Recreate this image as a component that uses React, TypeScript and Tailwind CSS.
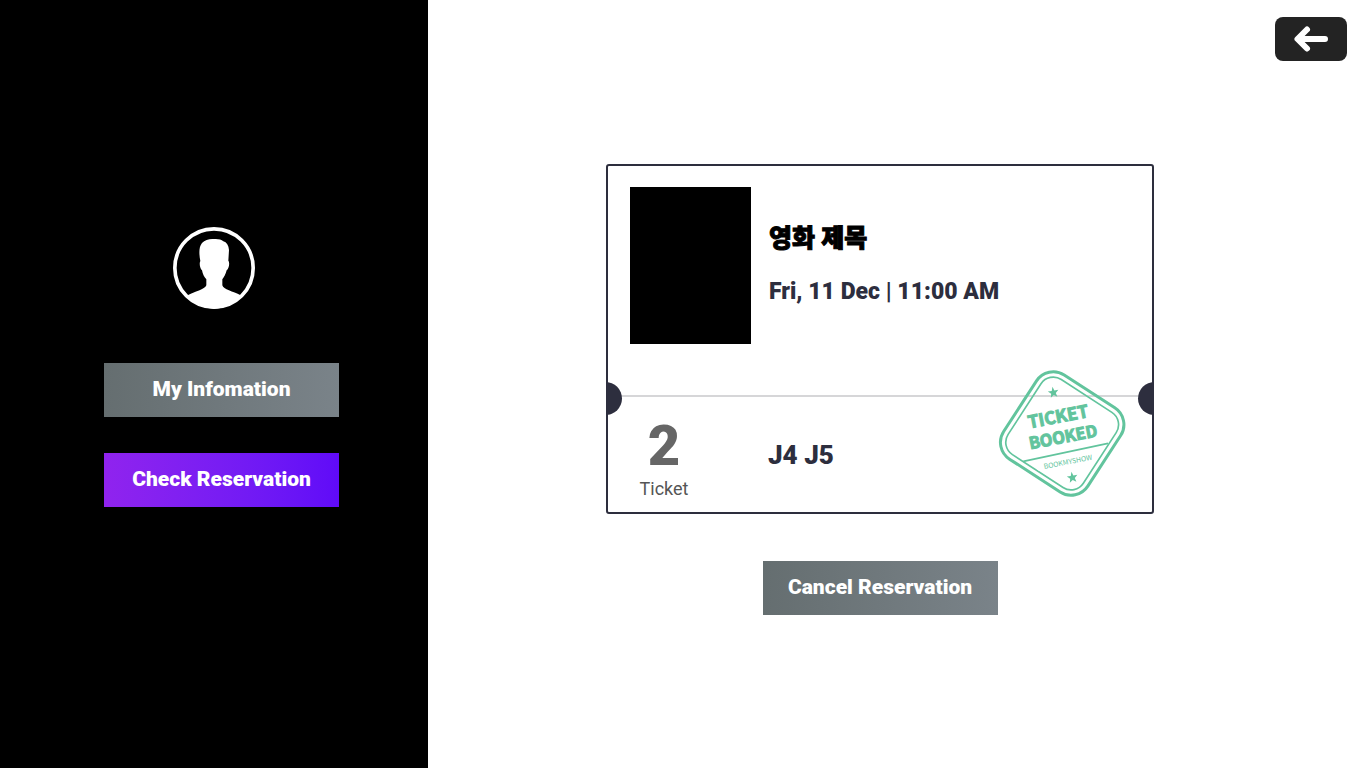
import type { ReactNode } from 'react';

function Avatar() {
  return (
    <svg viewBox="42 36 246 246" className="size-[82px]" role="img" aria-label="Profile">
      <circle cx="165" cy="159" r="117.5" fill="none" stroke="#fff" strokeWidth="11" />
      <path
        fill="#fff"
        d="M165 72 C176 71 187 73 193 79 C203 82 209 91 210 105 L208 137 C213 142 210 161 203 166 C200 178 195 187 190 193 L190 211 C193 224 222 229 245 241 C224 268 197 281 165 281 C133 281 105 267 86 241 C106 230 138 224 142 211 L142 193 C136 187 131 177 129 166 C123 161 120 144 124 138 C120 117 119 96 129 84 C138 74 151 71 165 72 Z"
      />
    </svg>
  );
}

const star =
  'M0 -17 L4 -5 L16 -5 L7 3 L10 15 L0 8 L-10 15 L-7 3 L-16 -5 L-4 -5 Z';

function BookedStamp() {
  return (
    <svg
      viewBox="39 30 384 384"
      className="absolute top-[204px] right-[26px] size-32"
      role="img"
      aria-label="Ticket booked"
    >
      <g fill="none" stroke="#62c49d">
        <g transform="rotate(33 231.5 220.5)">
          <rect x="81" y="70" width="301" height="301" rx="60" strokeWidth="9" />
          <rect x="97" y="86" width="269" height="269" rx="44" strokeWidth="5" />
        </g>
        <path d="M115 304 L369 250" strokeWidth="5" />
      </g>
      <path d="M156 323 L164 329" stroke="#fff" strokeWidth="8" />
      <g fill="#62c49d">
        <path d={star} transform="translate(205 97) rotate(-9)" />
        <path d={star} transform="translate(262 352) rotate(-9)" />
        <g
          transform="rotate(-11 231 220)"
          textAnchor="middle"
          className="font-['Noto_Sans_CJK_KR',sans-serif]"
        >
          <text x="229" y="187" fontSize="52" fontWeight="700" stroke="#62c49d" strokeWidth="3">TICKET</text>
          <text x="232" y="249" fontSize="49" fontWeight="700" stroke="#62c49d" strokeWidth="3">BOOKED</text>
          <text x="232" y="315" fontSize="21">BOOKMYSHOW</text>
        </g>
      </g>
    </svg>
  );
}

const tones = {
  gray: 'from-[#656e70] to-[#7a8389]',
  violet: 'from-[#9023ee] to-[#600af8]',
};

function ActionButton({ tone, children }: { tone: keyof typeof tones; children: ReactNode }) {
  return (
    <button
      type="button"
      className={`h-[54px] w-[235px] cursor-pointer bg-linear-to-r text-[21px] font-black text-white ${tones[tone]}`}
    >
      {children}
    </button>
  );
}

function Ticket() {
  return (
    <article className="relative w-[548px] max-w-full rounded-[3px] border-2 border-[#2d2e3e] text-[#2d2e3e]">
      <div className="flex gap-[18px] px-[22px] pt-[21px] pb-[51px]">
        <div className="h-[157px] w-[121px] shrink-0 bg-black" />
        <div className="pt-8">
          <h1 className="text-[25px] leading-[40px] font-black text-black [-webkit-text-stroke:1px_#000]">영화 제목</h1>
          <p className="mt-4 text-[23px] leading-[34px] font-black">Fri, 11 Dec | 11:00 AM</p>
        </div>
      </div>
      <div className="relative border-t-2 border-[#d6d6d8]">
        <div className="absolute inset-x-0 -top-[15px] flex h-[33px] justify-between overflow-hidden">
          <span className="-ml-[19px] size-[33px] rounded-full bg-[#2d2e3e]" />
          <span className="-mr-[19px] size-[33px] rounded-full bg-[#2d2e3e]" />
        </div>
      </div>
      <div className="flex h-[115px] items-center pl-[22px]">
        <div className="flex w-[68px] flex-col items-center pt-2.5">
          <span className="text-[56px] leading-[58px] font-black text-[#666]">2</span>
          <span className="text-lg leading-7 text-[#555]">Ticket</span>
        </div>
        <p className="pl-[70px] text-[26px] leading-9 font-black">J4 J5</p>
      </div>
      <BookedStamp />
    </article>
  );
}

export default function App() {
  return (
    <div className="flex min-h-screen bg-white font-['Roboto','Noto_Sans_CJK_KR',sans-serif]">
      <aside className="flex w-[428px] shrink-0 flex-col items-center justify-center bg-black pb-[34px]">
        <Avatar />
        <nav className="mt-[54px] flex flex-col gap-9 pl-[15px]">
          <ActionButton tone="gray">My Infomation</ActionButton>
          <ActionButton tone="violet">Check Reservation</ActionButton>
        </nav>
      </aside>
      <div className="flex min-w-0 flex-1 flex-col">
        <header className="flex justify-end pt-[17px] pr-[19px]">
          <button
            type="button"
            aria-label="Back"
            className="flex h-11 w-[72px] cursor-pointer items-center justify-center rounded-lg bg-[#232323]"
          >
            <svg viewBox="0 0 36 30" className="h-[30px] w-9" fill="none" stroke="#fff" strokeWidth="6" strokeLinecap="round" strokeLinejoin="round">
              <path d="M32 15 H5 M14 5.5 L4.5 15 L14 24.5" />
            </svg>
          </button>
        </header>
        <main className="flex flex-1 flex-col items-center justify-center pr-[34px] pb-[50px]">
          <Ticket />
          <div className="mt-[47px]">
            <ActionButton tone="gray">Cancel Reservation</ActionButton>
          </div>
        </main>
      </div>
    </div>
  );
}
